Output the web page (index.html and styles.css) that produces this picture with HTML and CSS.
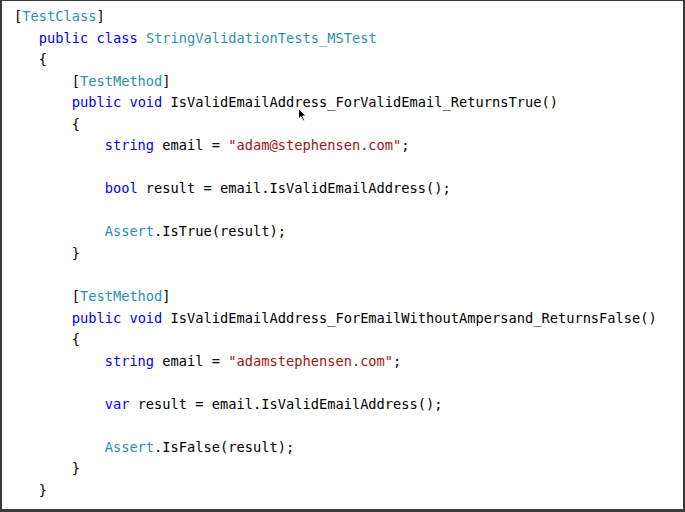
FILE: index.html
```html
<!DOCTYPE html>
<html>
<head>
<meta charset="utf-8">
<link rel="stylesheet" href="styles.css">
</head>
<body>
<div class="frame">
<pre class="code">[<span class="t">TestClass</span>]
   <span class="k">public</span> <span class="k">class</span> <span class="t">StringValidationTests_MSTest</span>
   {
       [<span class="t">TestMethod</span>]
       <span class="k">public</span> <span class="k">void</span> IsValidEmailAddress_ForValidEmail_ReturnsTrue()
       {
           <span class="k">string</span> email = <span class="s">"adam@stephensen.com"</span>;

           <span class="k">bool</span> result = email.IsValidEmailAddress();

           <span class="t">Assert</span>.IsTrue(result);
       }

       [<span class="t">TestMethod</span>]
       <span class="k">public</span> <span class="k">void</span> IsValidEmailAddress_ForEmailWithoutAmpersand_ReturnsFalse()
       {
           <span class="k">string</span> email = <span class="s">"adamstephensen.com"</span>;

           <span class="k">var</span> result = email.IsValidEmailAddress();

           <span class="t">Assert</span>.IsFalse(result);
       }
   }</pre>
<svg class="cursor" width="10" height="15" viewBox="0 0 10 15"><path d="M0.5 0.5 L0.5 11 L3 8.6 L5 13 L6.6 12.3 L4.7 8 L8 8 Z" fill="#000" stroke="#fff" stroke-width="1"/></svg>
</div>
</body>
</html>
```
FILE: styles.css
```css
html, body {
  margin: 0;
  padding: 0;
  background: #fff;
}
.frame {
  position: relative;
  box-sizing: border-box;
  width: 685px;
  height: 512px;
  border-top: 1px solid #3a3a3a;
  border-left: 2px solid #3a3a3a;
  border-right: 2px solid #3a3a3a;
  border-bottom: 3px solid #3a3a3a;
  overflow: hidden;
}
.code {
  margin: 0;
  padding: 5px 0 0 12px;
  font-family: "DejaVu Sans Mono", monospace;
  font-size: 13.7px;
  line-height: 21.55px;
  color: #000;
}
.k { color: #0000ff; }
.t { color: #2b91af; }
.s { color: #a31515; }
.cursor {
  position: absolute;
  left: 296px;
  top: 107px;
}
```
